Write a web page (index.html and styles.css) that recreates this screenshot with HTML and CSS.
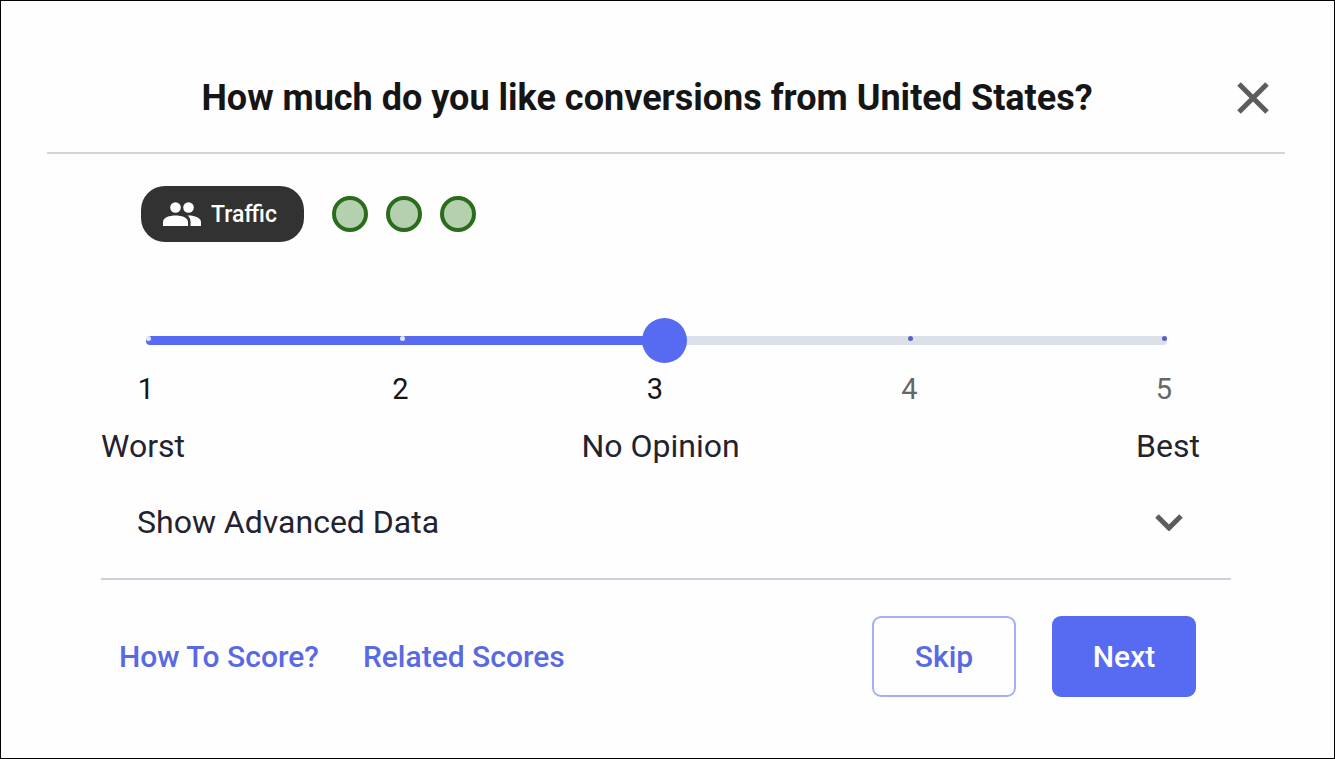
FILE: index.html
```
<!DOCTYPE html>
<html lang="en">
<head>
	<title>Score conversions</title>
	<meta charset="utf-8">
	<meta name="viewport" content="width=device-width, initial-scale=1">
	<link rel="stylesheet" href="styles.css">
</head>
<body>
	<main class="dialog">
		<header class="head">
			<h1>How much do you like conversions from United States?</h1>
			<button class="close" type="button" aria-label="Close">
				<svg width="32" height="32" viewBox="0 0 32 32"><path d="M2 2L30 30M30 2L2 30"/></svg>
			</button>
		</header>
		<div class="content">
			<div class="tags">
				<span class="chip">
					<svg width="38" height="26" viewBox="0 0 38 26">
						<circle cx="12.5" cy="6.5" r="5.3"/>
						<circle cx="25.5" cy="6.5" r="5.3"/>
						<path d="M0 25v-4c0-4.500 6.500-6.500 12.500-6.500S25 16.500 25 21v4z"/>
						<path d="M25.500 14.500C32 14.500 38 17 38 21v4H27.500v-4c0-3-1-5-3-6.500z"/>
					</svg>
					Traffic
				</span>
				<span class="dot"></span>
				<span class="dot"></span>
				<span class="dot"></span>
			</div>
			<!-- slider -->
			<div class="slider">
				<i class="mark on"></i>
				<i class="mark on"></i>
				<i class="mark"></i>
				<i class="mark"></i>
				<i class="mark"></i>
				<input type="range" min="1" max="5" step="1" value="3" aria-label="Score">
			</div>
			<div class="numbers">
				<span>1</span>
				<span>2</span>
				<span>3</span>
				<span class="off">4</span>
				<span class="off">5</span>
			</div>
			<div class="legend">
				<span>Worst</span>
				<span>No Opinion</span>
				<span>Best</span>
			</div>
			<button class="advanced" type="button" aria-expanded="false">
				Show Advanced Data
				<svg width="28" height="18" viewBox="0 0 28 18"><path d="M2 3L14 15L26 3"/></svg>
			</button>
			<footer class="foot">
				<a href="#">How To Score?</a>
				<a href="#">Related Scores</a>
				<button class="btn skip" type="button">Skip</button>
				<button class="btn next" type="button">Next</button>
			</footer>
		</div>
	</main>
</body>
</html>
```
FILE: styles.css
```
*{
	margin:0;
	padding:0;
	box-sizing:border-box;
}
body{
	min-height:100vh;
	border:1px solid #000;
	background:#fefefe;
	font-family:Roboto,"Liberation Sans",sans-serif;
	color:#23232f;
}
button{
	border:none;
	background:none;
	font-family:inherit;
	color:inherit;
	cursor:pointer;
}
.dialog{
	padding:43px 49px 60px 46px;
}
.head{
	display:flex;
	align-items:center;
	height:110px;
	padding-left:26px;
	border-bottom:2px solid #d4d4d4;
}
.head h1{
	flex:1;
	font-size:36px;
	font-weight:700;
	line-height:45px;
	text-align:center;
	color:#151515;
}
.close{
	display:flex;
	justify-content:center;
	width:64px;
}
.close svg,
.advanced svg{
	fill:none;
	stroke:#5c5c5c;
	stroke-width:5;
}
.content{
	padding:32px 54px 0;
}
.tags{
	display:flex;
	align-items:center;
	gap:18px;
	padding-left:40px;
}
.chip{
	display:flex;
	align-items:center;
	gap:10px;
	height:56px;
	margin-right:10px;
	padding:0 27px 0 22px;
	border-radius:24px;
	background:#323232;
	font-size:23px;
	font-weight:500;
	color:#fff;
}
.chip svg{
	fill:#fff;
}
.dot{
	width:36px;
	height:36px;
	border:4px solid #2a6b1c;
	border-radius:50%;
	background:#b4d0ae;
}
.slider{
	position:relative;
	display:flex;
	justify-content:space-between;
	height:9px;
	margin:94px 64px 0 45px;
	border-radius:4px;
	background:linear-gradient(90deg,#566af2 50%,#dce0e8 50%);
}
.mark{
	width:5px;
	height:5px;
	border-radius:50%;
	background:#5a5fd0;
}
.mark.on{
	background:#e4e7fb;
}
/* the thumb sits a little past its mark */
.slider input{
	position:absolute;
	top:-18px;
	left:0;
	width:calc(100% + 16px);
	height:45px;
	background:none;
	-webkit-appearance:none;
	appearance:none;
}
.slider input::-webkit-slider-thumb{
	width:45px;
	height:45px;
	border-radius:50%;
	background:#566af2;
	-webkit-appearance:none;
}
.numbers{
	display:flex;
	justify-content:space-between;
	margin-top:26px;
	padding:0 57px 0 35px;
	font-size:29px;
	line-height:36px;
	text-align:center;
	color:#151515;
}
.numbers span{
	width:20px;
}
.numbers .off{
	color:#666;
}
.legend{
	display:flex;
	justify-content:space-between;
	margin-top:19px;
	padding-right:31px;
	font-size:32px;
	line-height:40px;
}
.advanced{
	display:flex;
	align-items:center;
	justify-content:space-between;
	width:100%;
	height:114px;
	padding:0 48px 0 36px;
	border-bottom:2px solid #cfcfda;
	font-size:32px;
}
.foot{
	display:flex;
	align-items:center;
	gap:36px;
	padding:36px 35px 0 18px;
	font-size:30px;
	font-weight:500;
}
.foot a{
	margin-right:8px;
	color:#5969e4;
	text-decoration:none;
}
.btn{
	width:144px;
	height:81px;
	border:2px solid #566af2;
	border-radius:9px;
	font-size:30px;
	font-weight:500;
}
.skip{
	margin-left:auto;
	border-color:#a6aff5;
	color:#5969e4;
}
.next{
	background:#566af2;
	color:#fff;
}
```
